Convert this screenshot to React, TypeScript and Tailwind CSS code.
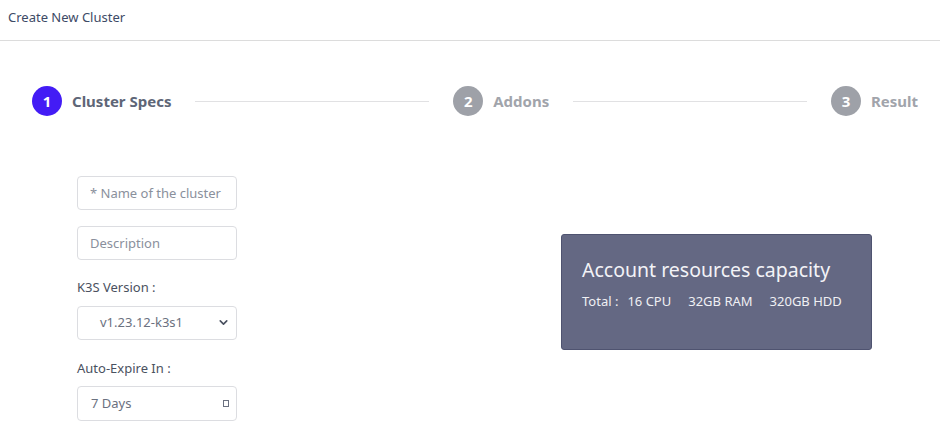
import { ChevronDown } from 'lucide-react';

const font = { fontFamily: '"Noto Sans", "Open Sans", sans-serif' };

function Step({ n, label, active }: { n: number; label: string; active?: boolean }) {
  return (
    <div className="flex items-center gap-[10px] shrink-0">
      <span
        className={`w-[30px] h-[30px] rounded-full flex items-center justify-center text-white text-[15px] font-bold ${
          active ? 'bg-[#431cf5]' : 'bg-[#9ea1a8]'
        }`}
      >
        {n}
      </span>
      <span className={`text-[15px] font-bold ${active ? 'text-[#5e6677]' : 'text-[#a1a4ab]'}`}>{label}</span>
    </div>
  );
}

export default function App() {
  return (
    <div className="w-[940px] h-[439px] bg-white overflow-hidden text-[#3c4257]" style={font}>
      {/* Header */}
      <div className="h-[41px] border-b border-[#dcdcdc] flex items-center px-[8px] pb-[5px]">
        <span className="text-[13px] text-[#3d4a66]">Create New Cluster</span>
      </div>

      {/* Stepper */}
      <div className="flex items-center pl-[32px] pr-[22px] mt-[45px]">
        <Step n={1} label="Cluster Specs" active />
        <div className="flex-1 h-px bg-[#e1e1e3] mx-[24px]" />
        <Step n={2} label="Addons" />
        <div className="flex-1 h-px bg-[#e1e1e3] mx-[24px]" />
        <Step n={3} label="Result" />
      </div>

      {/* Body */}
      <div className="flex mt-[60px]">
        <div className="w-[160px] ml-[77px] flex flex-col text-[13px]">
          <input
            placeholder="* Name of the cluster"
            className="h-[34px] border border-[#dcdde1] rounded-[4px] px-[12px] placeholder:text-[#8a909c] outline-none"
          />
          <input
            placeholder="Description"
            className="h-[34px] mt-[16px] border border-[#dcdde1] rounded-[4px] px-[12px] placeholder:text-[#8a909c] outline-none"
          />
          <label className="mt-[18px] text-[#4a5160]">K3S Version :</label>
          <div className="mt-[8px] h-[34px] border border-[#dcdde1] rounded-[4px] flex items-center pl-[22px] pr-[6px] text-[#6b7180]">
            <span className="flex-1">v1.23.12-k3s1</span>
            <ChevronDown size={13} strokeWidth={3} className="text-[#4a5160]" />
          </div>
          <label className="mt-[19px] text-[#4a5160]">Auto-Expire In :</label>
          <div className="mt-[8px] h-[35px] border border-[#dcdde1] rounded-[4px] flex items-center pl-[13px] pr-[6px] text-[#6b7180]">
            <span className="flex-1">7 Days</span>
            <span className="w-[6px] h-[7px] border border-[#6b7180] mr-[1px]" />
          </div>
        </div>

        <div className="ml-[324px] mt-[58px] w-[311px] h-[116px] bg-[#646883] border border-[#4f5370] rounded-[3px] px-[20px] pt-[21px] text-white">
          <div className="text-[19.5px] leading-[28px] text-[#f3f3f7]">Account resources capacity</div>
          <div className="mt-[8px] text-[13px] text-[#f0f0f4] flex">
            <span>Total :</span>
            <span className="ml-[9px]">16 CPU</span>
            <span className="ml-[17px]">32GB RAM</span>
            <span className="ml-[17px]">320GB HDD</span>
          </div>
        </div>
      </div>
    </div>
  );
}
